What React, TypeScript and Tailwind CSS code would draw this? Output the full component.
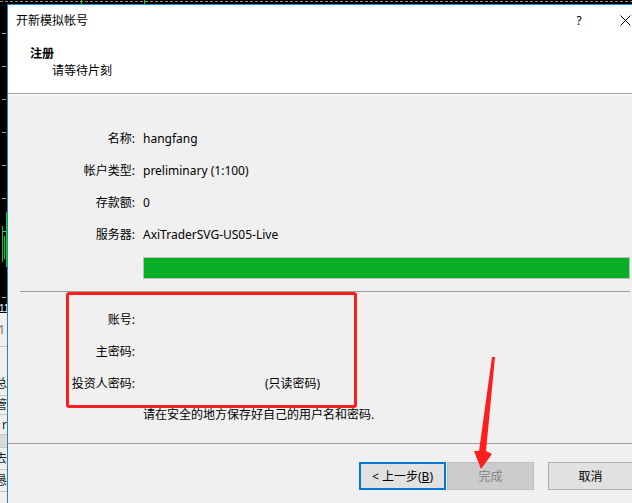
import React from "react";

const FONT = "font-['Noto_Sans','Noto_Sans_CJK_SC',sans-serif]";

function TopStrip() {
  return (
    <svg width="632" height="4" className="block">
      <rect x="0" y="0" width="632" height="4" fill="#000" />
      <line x1="0" y1="1.5" x2="632" y2="1.5" stroke="#8c8c8c" strokeWidth="1" strokeDasharray="3 2" />
      <line x1="81.5" y1="0" x2="81.5" y2="4" stroke="#00e000" strokeWidth="1" />
      <line x1="144.5" y1="0" x2="144.5" y2="4" stroke="#00e000" strokeWidth="1" />
    </svg>
  );
}

function LeftStrip() {
  const ticks = [29, 62, 95, 128, 161, 194, 227, 293];
  return (
    <div className="flex w-[7px] shrink-0 flex-col overflow-hidden">
      <svg width="7" height="309" className="block shrink-0">
        <rect x="0" y="0" width="7" height="309" fill="#000" />
        {ticks.map((t) => (
          <line key={t} x1="2" y1={t + 0.5} x2="6" y2={t + 0.5} stroke="#a8a8a8" strokeWidth="1" />
        ))}
        <line x1="2.5" y1="222" x2="2.5" y2="258" stroke="#00e000" strokeWidth="1" />
        <line x1="4.5" y1="232" x2="4.5" y2="255" stroke="#00e000" strokeWidth="1" />
        <line x1="6.5" y1="208" x2="6.5" y2="263" stroke="#00e000" strokeWidth="1" />
        <text x="-1" y="308" fontSize="10" fill="#fff" fontFamily="Liberation Sans, sans-serif">11</text>
      </svg>
      <div className="flex flex-1 flex-col bg-[#efefef] text-[12px] leading-[14px]">
        <div className="flex h-[34px] shrink-0 items-center justify-end overflow-hidden border-b border-[#c4c4c4] pr-[2px] text-[#8a6a4a]">
          <span className="whitespace-nowrap">1</span>
        </div>
        <div className="flex h-[49px] shrink-0 items-end justify-end overflow-hidden border-b border-[#c4c4c4] pb-[4px] text-[#222]">
          <span className="whitespace-nowrap">总</span>
        </div>
        <div className="flex h-[19px] shrink-0 items-center justify-end overflow-hidden border-b border-[#c4c4c4] text-[#222]">
          <span className="whitespace-nowrap">管</span>
        </div>
        <div className="flex h-[19px] shrink-0 items-center justify-end overflow-hidden text-[#222]">
          <span className="whitespace-nowrap">r</span>
        </div>
        <div className="h-[14px] shrink-0 border-y border-[#c4c4c4] bg-[#d9d9d9]" />
        <div className="flex h-[22px] shrink-0 items-center justify-end overflow-hidden border-b border-[#c4c4c4] text-[#222]">
          <span className="whitespace-nowrap">去</span>
        </div>
        <div className="flex h-[22px] shrink-0 items-center justify-end overflow-hidden border-b border-[#c4c4c4] text-[#222]">
          <span className="whitespace-nowrap">恳</span>
        </div>
        <div className="flex-1" />
      </div>
    </div>
  );
}

function Row({ label, value }: { label: string; value?: React.ReactNode }) {
  return (
    <div className="flex h-[32px] items-center">
      <div className="w-[127px] shrink-0 text-right">{label}</div>
      <div className="ml-[8px] whitespace-nowrap">{value}</div>
    </div>
  );
}

function Dialog() {
  return (
    <div className="flex min-w-0 flex-1 flex-col overflow-hidden border-l border-t border-[#1883d7] bg-[#f0f0f0] text-[12px] leading-[17px] text-black">
      {/* header */}
      <div className="h-[88px] shrink-0 bg-white">
        <div className="flex h-[30px] items-center">
          <span className="pl-[8px]">开新模拟帐号</span>
          <div className="-mr-[16px] ml-auto flex h-full shrink-0 items-center">
            <div className="flex w-[46px] items-center justify-center">?</div>
            <div className="flex w-[46px] items-center justify-center">
              <svg width="11" height="11" viewBox="0 0 11 11">
                <path d="M0.5 0.5 L10.5 10.5 M10.5 0.5 L0.5 10.5" stroke="#000" strokeWidth="1" fill="none" />
              </svg>
            </div>
          </div>
        </div>
        <div className="mt-[10px] pl-[22px] font-bold">注册</div>
        <div className="pl-[44px]">请等待片刻</div>
      </div>
      <div className="h-px shrink-0 bg-[#a0a0a0]" />
      <div className="h-px shrink-0 bg-white" />

      {/* content */}
      <div className="pt-[27px]">
        <Row label="名称:" value="hangfang" />
        <Row label="帐户类型:" value="preliminary (1:100)" />
        <Row label="存款额:" value="0" />
        <Row label="服务器:" value="AxiTraderSVG-US05-Live" />
      </div>
      <div className="ml-[135px] mr-[2px] mt-[7px] h-[22px] border border-[#bcbcbc] bg-[#06ad26]" />
      <div className="ml-[12px] mr-[2px] mt-[12px] h-px bg-[#a0a0a0]" />
      <div className="mt-[11px]">
        <Row label="账号:" />
        <Row label="主密码:" />
        <Row label="投资人密码:" value={<span className="ml-[122px]">(只读密码)</span>} />
      </div>
      <div className="ml-[135px] mt-[7px] whitespace-nowrap">请在安全的地方保存好自己的用户名和密码.</div>
      <div className="mt-[20px] h-px shrink-0 bg-[#a0a0a0]" />

      {/* buttons */}
      <div className="ml-[351px] mt-[18px] flex h-[28px] shrink-0">
        <button className="flex h-full w-[87px] shrink-0 items-center justify-center border-2 border-[#0078d7] bg-[#e1e1e1] text-black">
          &lt; 上一步(<span className="underline">B</span>)
        </button>
        <button className="ml-[1px] flex h-full w-[87px] shrink-0 items-center justify-center border border-[#bfbfbf] bg-[#cccccc] text-[#838383]">
          完成
        </button>
        <button className="ml-[14px] flex h-full w-[85px] shrink-0 items-center justify-center border border-[#adadad] bg-[#e1e1e1] text-black">
          取消
        </button>
      </div>
    </div>
  );
}

export default function App() {
  return (
    <div className={`relative h-[503px] w-[632px] overflow-hidden bg-black ${FONT}`}>
      <TopStrip />
      <div className="flex h-[499px]">
        <LeftStrip />
        <Dialog />
      </div>

      {/* annotation: red box */}
      <div className="pointer-events-none absolute left-[66px] top-[292px] h-[116px] w-[291px] rounded-[3px] border-[3px] border-[#ff1e1e]" />
      {/* annotation: red arrow */}
      <svg className="pointer-events-none absolute left-0 top-0" width="632" height="503">
        <polygon points="492,357 495,357 486,451 492,454 481,469 474,451 479,451" fill="#ff1e1e" />
      </svg>
    </div>
  );
}
